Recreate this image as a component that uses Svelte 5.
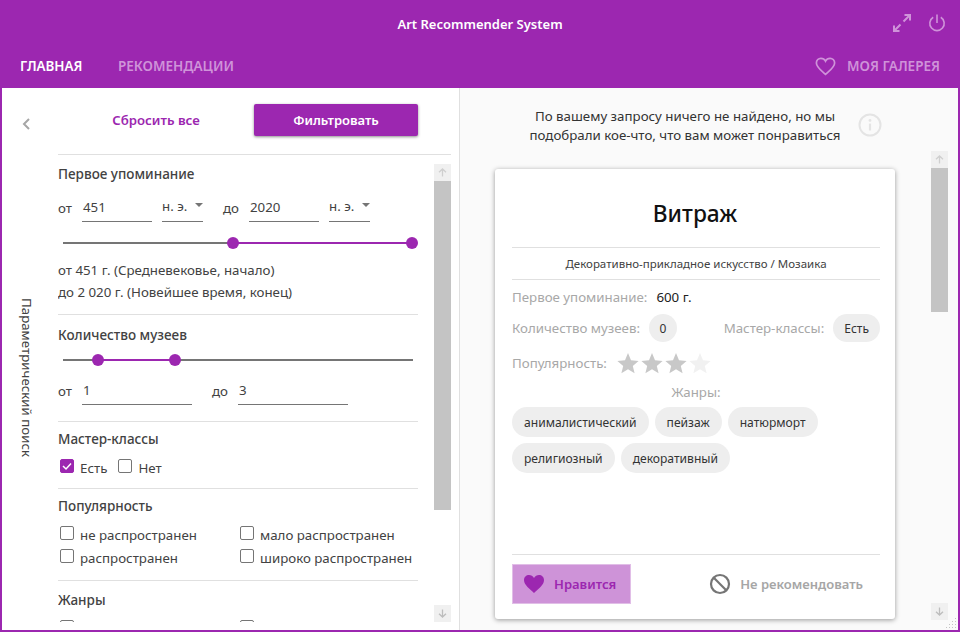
<script>
  const genres = ['анималистический', 'пейзаж', 'натюрморт', 'религиозный', 'декоративный'];
  const stars = [true, true, true, false];
  const pop = ['не распространен', 'мало распространен', 'распространен', 'широко распространен'];
  const grip = [[9,0],[6,3],[9,3],[3,6],[6,6],[9,6],[0,9],[3,9],[6,9],[9,9]];
</script>

<div class="app">
  <header>
    <div class="titlebar">
      <div class="title">Art Recommender System</div>
      <div class="winicons">
        <svg width="20" height="20" viewBox="0 0 20 20" fill="none" stroke="#cf93d9" stroke-width="2">
          <path d="M11.5 8.5 L18 2 M12.5 2 H18 V7.5 M8.5 11.5 L2 18 M2 12.5 V18 H7.5" />
        </svg>
        <svg width="18" height="20" viewBox="0 0 18 20" fill="none" stroke="#cf93d9" stroke-width="1.6">
          <path d="M9 1.5 V10 M5.2 4.3 A7.2 7.2 0 1 0 12.8 4.3" />
        </svg>
      </div>
    </div>
    <nav>
      <span class="tab active">ГЛАВНАЯ</span>
      <span class="tab">РЕКОМЕНДАЦИИ</span>
      <span class="gallery">
        <svg width="21" height="19" viewBox="0 0 22 20" fill="none" stroke="#cf93d9" stroke-width="1.8">
          <path d="M11 18.3 C7 14.6 1.4 10.8 1.4 6.3 C1.4 3.4 3.6 1.4 6.2 1.4 C8.2 1.4 10 2.5 11 4.4 C12 2.5 13.8 1.4 15.8 1.4 C18.4 1.4 20.6 3.4 20.6 6.3 C20.6 10.8 15 14.6 11 18.3 Z" />
        </svg>
        <span class="tab">МОЯ ГАЛЕРЕЯ</span>
      </span>
    </nav>
  </header>

  <main>
    <aside>
      <div class="rail">
        <svg class="chev" width="10" height="14" viewBox="0 0 10 14" fill="none" stroke="#a6a6a6" stroke-width="2">
          <path d="M8 2 L3 7 L8 12" />
        </svg>
        <div class="vert">Параметрический поиск</div>
      </div>
      <div class="filters">
        <div class="actions">
          <button class="reset">Сбросить все</button>
          <button class="apply">Фильтровать</button>
        </div>
        <div class="scrollwrap">
          <div class="scrollcontent">
            <section class="s1">
              <h3>Первое упоминание</h3>
              <div class="row r1">
                <span class="lab l1">от</span>
                <span class="inp w70">451</span>
                <span class="sel">н. э.<i></i></span>
                <span class="lab l2">до</span>
                <span class="inp w70">2020</span>
                <span class="sel">н. э.<i></i></span>
              </div>
              <div class="slider sl1">
                <div class="fill f1"></div>
                <b class="th t1a"></b><b class="th t1b"></b>
              </div>
              <p class="desc">от 451 г. (Средневековье, начало)</p>
              <p class="desc">до 2 020 г. (Новейшее время, конец)</p>
            </section>
            <section class="s2">
              <h3>Количество музеев</h3>
              <div class="slider sl2">
                <div class="fill f2"></div>
                <b class="th t2a"></b><b class="th t2b"></b>
              </div>
              <div class="row r2">
                <span class="lab l1">от</span>
                <span class="inp w110">1</span>
                <span class="lab l3">до</span>
                <span class="inp w110">3</span>
              </div>
            </section>
            <section class="s3">
              <h3>Мастер-классы</h3>
              <div class="checks-inline">
                <label class="ck">
                  <span class="box on">
                    <svg width="14" height="14" viewBox="0 0 14 14" fill="none" stroke="#fff" stroke-width="1.5"><path d="M3 7 L6 10 L11 4.5" /></svg>
                  </span>
                  <span class="ct">Есть</span>
                </label>
                <label class="ck"><span class="box"></span><span class="ct">Нет</span></label>
              </div>
            </section>
            <section class="s4">
              <h3>Популярность</h3>
              <div class="grid">
                {#each pop as p}
                  <label class="ck"><span class="box"></span><span class="ct">{p}</span></label>
                {/each}
              </div>
            </section>
            <section class="s5">
              <h3>Жанры</h3>
              <div class="grid">
                <label class="ck"><span class="box"></span></label>
                <label class="ck"><span class="box"></span></label>
              </div>
            </section>
          </div>
          <div class="sb sbl">
            <div class="sbtn"><svg width="9" height="9" viewBox="0 0 9 9" fill="none" stroke="#cfcfcf" stroke-width="1.3"><path d="M4.5 8.5 V1 M1 4.3 L4.5 1 L8 4.3" /></svg></div>
            <div class="thumb tl"></div>
            <div class="sp"></div>
            <div class="sbtn"><svg width="9" height="9" viewBox="0 0 9 9" fill="none" stroke="#bdbdbd" stroke-width="1.3"><path d="M4.5 .5 V8 M1 4.7 L4.5 8 L8 4.7" /></svg></div>
          </div>
        </div>
      </div>
    </aside>

    <div class="right">
      <div class="results">
        <div class="msg">
          <p>По вашему запросу ничего не найдено, но мы<br />подобрали кое-что, что вам может понравиться</p>
          <svg width="24" height="24" viewBox="0 0 24 24" fill="none">
            <circle cx="12" cy="12" r="10.5" stroke="#e4e4e4" stroke-width="2" />
            <circle cx="12" cy="7.4" r="1.4" fill="#e4e4e4" />
            <path d="M12 10.6 V17.5" stroke="#e4e4e4" stroke-width="2.2" />
          </svg>
        </div>
        <article class="card">
          <h1>Витраж</h1>
          <div class="sub">Декоративно-прикладное искусство / Мозаика</div>
          <div class="line first"><span class="k">Первое упоминание:</span><span class="v">600 г.</span></div>
          <div class="line split">
            <span class="pair"><span class="k">Количество музеев:</span><span class="pill n">0</span></span>
            <span class="pair"><span class="k">Мастер-классы:</span><span class="pill">Есть</span></span>
          </div>
          <div class="line stars">
            <span class="k">Популярность:</span>
            <span class="starrow">
              {#each stars as on}
                <svg class:off={!on} width="24" height="22" viewBox="0 0 24 22">
                  <path d="M12 1 L15 8.3 L22.6 8.9 L16.8 13.9 L18.6 21.3 L12 17.3 L5.4 21.3 L7.2 13.9 L1.4 8.9 L9 8.3 Z" />
                </svg>
              {/each}
            </span>
          </div>
          <div class="gl k">Жанры:</div>
          <div class="chips">
            {#each genres as g}<span class="chip">{g}</span>{/each}
          </div>
          <div class="grow"></div>
          <div class="foot">
            <button class="like">
              <svg width="22" height="20" viewBox="0 0 22 20" fill="#9c27b0">
                <path d="M11 19 C7 15 1 11.2 1 6 C1 3 3.3 1 6 1 C8 1 10 2.2 11 4 C12 2.2 14 1 16 1 C18.7 1 21 3 21 6 C21 11.2 15 15 11 19 Z" />
              </svg>
              Нравится
            </button>
            <button class="dis">
              <svg width="22" height="22" viewBox="0 0 22 22" fill="none" stroke="#757575" stroke-width="2.2">
                <circle cx="11" cy="11" r="9" /><path d="M4.8 4.8 L17.2 17.2" />
              </svg>
              Не рекомендовать
            </button>
          </div>
        </article>
      </div>
      <div class="sb sbr">
        <div class="sbtn"><svg width="9" height="9" viewBox="0 0 9 9" fill="none" stroke="#cfcfcf" stroke-width="1.3"><path d="M4.5 8.5 V1 M1 4.3 L4.5 1 L8 4.3" /></svg></div>
        <div class="thumb tr"></div>
        <div class="sp"></div>
        <div class="sbtn"><svg width="9" height="9" viewBox="0 0 9 9" fill="none" stroke="#bdbdbd" stroke-width="1.3"><path d="M4.5 .5 V8 M1 4.7 L4.5 8 L8 4.7" /></svg></div>
      </div>
      <svg class="grip" width="11" height="11" viewBox="0 0 11 11" fill="#c4c4c4">
        {#each grip as g}<rect x={g[0]} y={g[1]} width="1" height="1" />{/each}
      </svg>
    </div>
  </main>
</div>

<style>
  :global(body) { margin: 0; }
  * { box-sizing: border-box; }
  .app {
    width: 960px; height: 632px; overflow: hidden; display: flex; flex-direction: column;
    font-family: "Noto Sans", "Open Sans", sans-serif; font-size: 13.3px; color: #424242;
    border: 2px solid #9c27b0; border-top: 0; background: #fafafa;
  }
  header { background: #9c27b0; margin: 0 -2px; height: 88px; flex: none; }
  .titlebar { height: 44px; position: relative; display: flex; align-items: center; justify-content: center; padding-top: 3px; }
  .title { color: #fff; font-weight: 600; font-size: 13px; }
  .winicons { position: absolute; right: 14px; top: 13px; display: flex; gap: 16px; }
  nav { height: 44px; display: flex; align-items: center; padding: 0 20px; gap: 35.5px; }
  .tab { color: #cf93d9; font-weight: 600; font-size: 13.5px; }
  .tab.active { color: #fff; font-size: 13.4px; }
  .gallery { margin-left: auto; display: flex; align-items: center; gap: 11px; }

  main { flex: 1; display: flex; min-height: 0; }
  aside { width: 458px; flex: none; background: #fff; border-right: 1px solid #e0e0e0; display: flex; }
  .rail { width: 56px; flex: none; display: flex; flex-direction: column; align-items: center; padding: 29px 6px 5px 0; }
  .chev { flex: none; margin-right: 2px; }
  .vert { flex: 1; writing-mode: vertical-rl; display: flex; align-items: center; justify-content: center; white-space: nowrap; }

  .filters { width: 393px; display: flex; flex-direction: column; min-height: 0; }
  .actions { height: 67px; flex: none; border-bottom: 1px solid #e0e0e0; display: flex; align-items: flex-start; padding-top: 16px; }
  button { border: 0; background: none; font: inherit; padding: 0; }
  .reset { width: 196px; height: 32px; color: #9c27b0; font-weight: 600; font-size: 13.2px; }
  .apply { width: 164px; height: 32px; background: #9c27b0; color: #fff; font-weight: 600; font-size: 13px; border-radius: 2px; box-shadow: 0 1px 3px rgba(0,0,0,.45); }

  .scrollwrap { flex: 1; min-height: 0; display: flex; overflow: hidden; }
  .scrollcontent { width: 360px; flex: none; overflow: hidden; margin-bottom: 8px; }
  section { border-bottom: 1px solid #e0e0e0; }
  section.s5 { border: 0; }
  h3 { margin: 0; font-size: 13.5px; font-weight: 500; line-height: 20px; color: #424242; }
  .s1 { padding: 9px 0 11px; }
  .s2 { padding: 10px 0 16px; }
  .s3 { padding: 7px 0 12px; }
  .s4 { padding: 7px 0 14px; }
  .s5 { padding: 9px 0 0; }

  .row { display: flex; align-items: flex-end; height: 30px; line-height: 18px; }
  .r1 { margin-top: 8px; }
  .r2 { margin-top: 9px; }
  .lab { padding-bottom: 5px; }
  .l1 { width: 24px; }
  .l2 { width: 26px; margin-left: 20px; }
  .l3 { width: 26px; margin-left: 20px; }
  .inp { border-bottom: 1px solid #757575; height: 30px; padding: 6px 0 0 1px; display: block; }
  .w70 { width: 70px; }
  .w110 { width: 110px; }
  .sel { width: 41px; margin-left: 10px; border-bottom: 1px solid #757575; height: 30px; padding-top: 5px; position: relative; display: block; }
  .sel i { position: absolute; right: 0; top: 11px; border: 4px solid transparent; border-top: 4px solid #757575; border-left-width: 4.5px; border-right-width: 4.5px; }

  .slider { position: relative; height: 12px; width: 350px; margin-left: 5px; }
  .slider::before { content: ""; position: absolute; left: 0; right: 0; top: 4.75px; height: 2.5px; background: #757575; }
  .sl1 { margin-top: 15px; }
  .sl2 { margin-top: 9px; }
  .fill { position: absolute; top: 4.75px; height: 2.5px; background: #9c27b0; }
  .f1 { left: 170px; width: 179px; }
  .f2 { left: 35px; width: 77px; }
  .th { position: absolute; top: 0; width: 12px; height: 12px; border-radius: 50%; background: #9c27b0; }
  .t1a { left: 164px; }
  .t1b { left: 343px; }
  .t2a { left: 29px; }
  .t2b { left: 106px; }

  .desc { margin: 0; line-height: 22px; }
  .sl1 + .desc { margin-top: 10px; }

  .checks-inline { display: flex; gap: 11px; margin: 7px 0 0 2px; }
  .ck { display: flex; align-items: center; gap: 6px; height: 20px; white-space: nowrap; }
  .ct { padding-top: 3px; }
  .box { width: 14px; height: 14px; flex: none; border: 1.5px solid #757575; border-radius: 2px; background: #fff; display: block; }
  .box svg { display: block; margin: -1.5px; }
  .box.on { background: #9c27b0; border-color: #9c27b0; }
  .grid { display: grid; grid-template-columns: 180px 180px; row-gap: 3px; margin: 7px 0 0 2px; }

  .sb { width: 17px; flex: none; display: flex; flex-direction: column; }
  .sbl { margin: 9px 0 8px 16px; }
  .sbr { margin: 63px 10px 10px 0; }
  .sbtn { height: 17px; flex: none; background: #f0f0f0; display: flex; align-items: center; justify-content: center; }
  .thumb { background: #c4c4c4; flex: none; }
  .tl { height: 329px; }
  .tr { height: 144px; }
  .sp { flex: 1; }

  .right { flex: 1; display: flex; min-width: 0; justify-content: space-between; position: relative; }
  .grip { position: absolute; right: 1px; bottom: 1px; }
  .results { flex: 1; display: flex; flex-direction: column; align-items: center; padding-right: 1px; min-width: 0; }
  .msg { width: 400px; height: 81px; flex: none; display: flex; align-items: flex-start; justify-content: center; padding: 19px 0 0 21px; gap: 17px; }
  .msg p { margin: 0; text-align: center; line-height: 19px; color: #333; white-space: nowrap; }
  .msg svg { margin-top: 6px; flex: none; }

  .card { width: 400px; height: 450px; flex: none; background: #fff; border-radius: 3px; box-shadow: 0 1px 5px rgba(0,0,0,.4); padding: 0 15px 0 17px; display: flex; flex-direction: column; }
  h1 { margin: 0; height: 79px; border-bottom: 1px solid #e0e0e0; display: flex; align-items: center; justify-content: center; font-size: 22.7px; font-weight: 500; color: #111; padding: 11px 2px 0 0; }
  .sub { height: 32px; border-bottom: 1px solid #e0e0e0; display: flex; align-items: center; justify-content: center; font-size: 11.5px; }
  .k { color: #a8a8a8; }
  .v { color: #212121; margin-left: 9px; }
  .line { display: flex; align-items: center; white-space: nowrap; }
  .first { height: 34px; }
  .split { height: 28px; justify-content: space-between; }
  .pair { display: flex; align-items: center; gap: 9px; }
  .pill { background: #eee; height: 28px; border-radius: 14px; padding: 0 11px; display: flex; align-items: center; color: #333; font-size: 12px; }
  .pill.n { width: 28px; padding: 0; justify-content: center; }
  .stars { height: 37px; margin-top: 2px; }
  .starrow { display: flex; margin-left: 9px; }
  .starrow svg { fill: #c8c8c8; display: block; }
  .starrow svg.off { fill: #f1f1f1; }
  .gl { text-align: center; height: 20px; line-height: 20px; margin-top: 1px; }
  .chips { display: flex; flex-wrap: wrap; gap: 6px; margin-top: 5px; width: 320px; }
  .chip { height: 30px; background: #eee; border-radius: 15px; padding: 0 12px; display: flex; align-items: center; font-size: 12.1px; color: #333; white-space: nowrap; }
  .grow { flex: 1; }
  .foot { height: 65px; flex: none; border-top: 1px solid #e0e0e0; display: flex; align-items: flex-start; padding-top: 9px; justify-content: space-between; }
  .like { width: 119px; height: 40px; background: #ce93d8; border: 1px solid #e1bee7; color: #9c27b0; font-weight: 600; font-size: 13px; display: flex; align-items: center; gap: 9px; padding-left: 10px; white-space: nowrap; }
  .dis { color: #a6a6a6; font-weight: 600; font-size: 13px; display: flex; align-items: center; gap: 9px; height: 40px; padding-right: 17px; white-space: nowrap; }
</style>
